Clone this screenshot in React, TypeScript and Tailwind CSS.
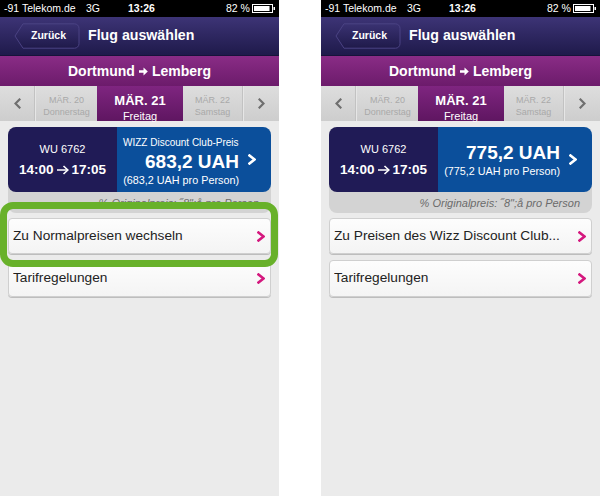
import React from "react";

const font = { fontFamily: '"Liberation Sans", Arial, sans-serif' };

function Chevron({ dir = "right", color, w = 7, h = 11, sw = 2.4 }: { dir?: "left" | "right"; color: string; w?: number; h?: number; sw?: number }) {
  const pts = dir === "right" ? `1.5,1.5 ${w - 1.5},${h / 2} 1.5,${h - 1.5}` : `${w - 1.5},1.5 1.5,${h / 2} ${w - 1.5},${h - 1.5}`;
  return (
    <svg width={w} height={h} viewBox={`0 0 ${w} ${h}`} className="block shrink-0">
      <polyline points={pts} fill="none" stroke={color} strokeWidth={sw} strokeLinecap="square" strokeLinejoin="miter" />
    </svg>
  );
}

function Battery() {
  return (
    <svg width="24" height="9" viewBox="0 0 24 9" className="block">
      <rect x="0.5" y="0.5" width="20" height="8" fill="none" stroke="#fff" strokeWidth="1" />
      <rect x="2" y="2" width="15.5" height="5" fill="#fff" />
      <rect x="21.5" y="3" width="1.5" height="3" fill="#fff" />
    </svg>
  );
}

function BackButton() {
  return (
    <div className="relative w-[66px] h-[26px] shrink-0">
      <svg width="66" height="26" viewBox="0 0 66 26" className="absolute inset-0">
        <defs>
          <linearGradient id="bb" x1="0" y1="0" x2="0" y2="1">
            <stop offset="0" stopColor="#3a3272" />
            <stop offset="1" stopColor="#1f1a4a" />
          </linearGradient>
        </defs>
        <path d="M9 0.8 H60.5 a4.5 4.5 0 0 1 4.5 4.5 V20.7 a4.5 4.5 0 0 1 -4.5 4.5 H9 L1 13 Z" fill="url(#bb)" stroke="#4b4384" strokeWidth="1" />
      </svg>
      <span className="absolute inset-0 flex items-center pl-[17px] text-white font-bold text-[10.5px]">Zurück</span>
    </div>
  );
}

function TimeArrow() {
  return (
    <svg width="12" height="10" viewBox="0 0 12 10" className="block mx-[3px]">
      <path d="M0 5 H10.5" stroke="#fff" strokeWidth="1.6" />
      <path d="M6.5 1 L10.8 5 L6.5 9" fill="none" stroke="#fff" strokeWidth="1.6" />
    </svg>
  );
}

function Phone({ variant }: { variant: "left" | "right" }) {
  const left = variant === "left";
  return (
    <div className="relative w-[279px] h-full bg-[#ebebeb] flex flex-col overflow-hidden" style={font}>
      {/* status bar */}
      <div className="h-[17px] bg-black text-white text-[10.5px] flex items-center leading-none">
        <span className="ml-[4px] w-[73px] whitespace-nowrap">-91 Telekom.de</span>
        <span className="ml-[9px] w-[14px]">3G</span>
        <span className="ml-[28px] w-[24px] font-bold">13:26</span>
        <span className="ml-[74px] w-[24px] whitespace-nowrap">82 %</span>
        <span className="ml-[2px]"><Battery /></span>
      </div>
      {/* nav bar */}
      <div className="h-[39px] flex items-center pl-[14px] bg-gradient-to-b from-[#3d3476] to-[#1f1a4b] border-b border-[#17133a]">
        <BackButton />
        <span className="ml-[8px] text-white font-bold text-[14.2px] whitespace-nowrap">Flug auswählen</span>
      </div>
      {/* route bar */}
      <div className="h-[30px] flex items-center justify-center gap-[4px] bg-gradient-to-b from-[#8a2c86] to-[#6c1b6b] text-white font-bold text-[14px]">
        <span>Dortmund</span>
        <svg width="9" height="9" viewBox="0 0 9 9" className="block">
          <path d="M0 3.2 H4.5 V0.5 L8.8 4.5 L4.5 8.5 V5.8 H0 Z" fill="#fff" />
        </svg>
        <span>Lemberg</span>
      </div>
      {/* date bar */}
      <div className="h-[35px] flex bg-gradient-to-b from-[#dedede] to-[#cdcdcd] leading-none">
        <div className="w-[35px] flex items-center justify-center border-r border-[#c2c2c2]">
          <Chevron dir="left" color="#6f6f6f" w={7} h={11} sw={2.2} />
        </div>
        <div className="w-[62px] flex flex-col items-center pt-[10px] gap-[3px] text-[#a9a9a9] text-[9px] border-l border-[#e6e6e6]">
          <span>MÄR. 20</span>
          <span>Donnerstag</span>
        </div>
        <div className="w-[86px] flex flex-col items-center pt-[8px] gap-[4px] text-white bg-gradient-to-b from-[#7f2580] to-[#5f1661]">
          <span className="font-bold text-[13px]">MÄR. 21</span>
          <span className="text-[11px]">Freitag</span>
        </div>
        <div className="w-[60px] flex flex-col items-center pt-[10px] gap-[3px] text-[#a9a9a9] text-[9px] border-r border-[#c2c2c2]">
          <span>MÄR. 22</span>
          <span>Samstag</span>
        </div>
        <div className="flex-1 flex items-center justify-center border-l border-[#e6e6e6]">
          <Chevron dir="right" color="#6f6f6f" w={7} h={11} sw={2.2} />
        </div>
      </div>
      {/* content */}
      <div className="px-[8px] pt-[6px] flex flex-col">
        <div className="rounded-[8px] bg-[#d3d3d3]">
          <div className="h-[65px] flex rounded-[8px] overflow-hidden">
            <div className="w-[109px] bg-[#201b56] flex flex-col items-center text-white leading-none pt-[17px]">
              <span className="text-[11px]">WU 6762</span>
              <span className="mt-[8px] font-bold text-[13.5px] whitespace-nowrap flex items-center">
                <span>14:00</span>
                <TimeArrow />
                <span>17:05</span>
              </span>
            </div>
            <div className={`flex-1 bg-[#0b4f9b] flex items-center text-white leading-none ${left ? "pt-[5px]" : ""}`}>
              <div className="ml-[6px] w-[116px] flex flex-col items-end">
                {left && <span className="text-[10px] whitespace-nowrap self-start">WIZZ Discount Club-Preis</span>}
                <span className={`${left ? "mt-[4px]" : ""} font-bold text-[19px] whitespace-nowrap`}>{left ? "683,2 UAH" : "775,2 UAH"}</span>
                <span className="mt-[4px] text-[10.8px] whitespace-nowrap">{left ? "(683,2 UAH pro Person)" : "(775,2 UAH pro Person)"}</span>
              </div>
              <div className={`ml-[9px] ${left ? "-mt-[5px]" : ""}`}>
                <Chevron dir="right" color="#ffffff" w={8} h={11} sw={2.6} />
              </div>
            </div>
          </div>
          <div className="h-[21px] flex items-center justify-end pr-[12px] pt-[1px] italic text-[11px] text-[#6b6b6b] whitespace-nowrap">
            % Originalpreis: ˝8";å pro Person
          </div>
        </div>
        <div className="mt-[5px] h-[36px] rounded-[4px] border border-[#cfcfcf] bg-gradient-to-b from-[#fdfdfd] to-[#f4f4f4] shadow-[0_1px_0_#bdbdbd] flex items-center pl-[4px] pr-[5px] pt-[1px]">
          <span className="flex-1 truncate text-[13.7px] text-[#222]">{left ? "Zu Normalpreisen wechseln" : "Zu Preisen des Wizz Discount Club..."}</span>
          <Chevron dir="right" color="#d4187e" w={8} h={11} sw={2.6} />
        </div>
        <div className="mt-[6px] h-[37px] rounded-[4px] border border-[#cfcfcf] bg-gradient-to-b from-[#fdfdfd] to-[#f4f4f4] shadow-[0_1px_0_#bdbdbd] flex items-center pl-[4px] pr-[5px]">
          <span className="flex-1 truncate text-[13.7px] text-[#222]">Tarifregelungen</span>
          <Chevron dir="right" color="#d4187e" w={8} h={11} sw={2.6} />
        </div>
      </div>
      {left && (
        <div className="absolute left-0 top-[202px] w-[278px] h-[65px] border-[7px] border-[#68b12a] rounded-[13px]" />
      )}
    </div>
  );
}

export default function App() {
  return (
    <div className="w-[600px] h-[496px] bg-white flex justify-between">
      <Phone variant="left" />
      <Phone variant="right" />
    </div>
  );
}
